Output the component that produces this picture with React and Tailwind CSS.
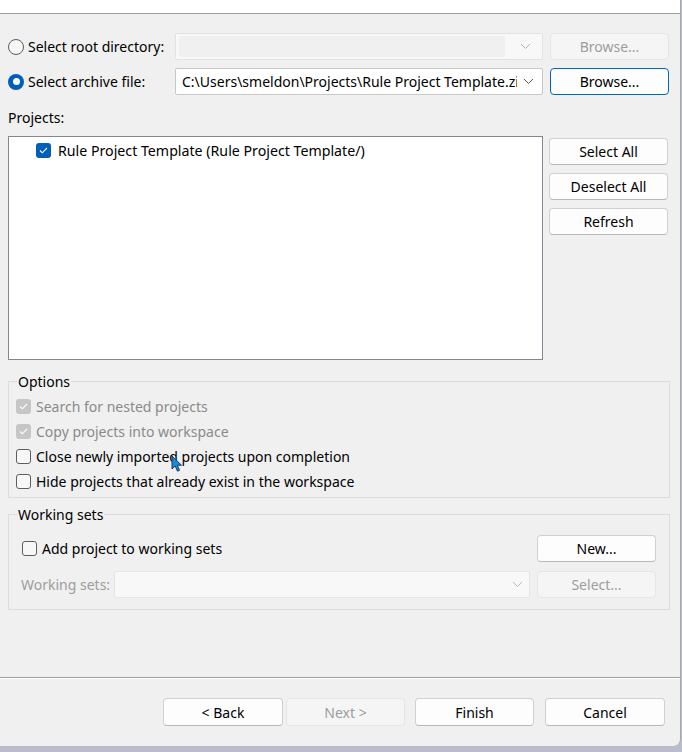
import React from "react";

const F = { fontFamily: '"Noto Sans", "Open Sans", sans-serif' };

function Chevron({ color = "#7a7a7a" }) {
  return (
    <svg width="11" height="7" viewBox="0 0 11 7" fill="none">
      <path d="M1 1l4.5 4.5L10 1" stroke={color} strokeWidth="1" />
    </svg>
  );
}

function Btn({ children, disabled, primary, className = "" }) {
  return (
    <div
      className={
        "flex items-center justify-center rounded-[4px] border text-[14px] " +
        (disabled
          ? "bg-[#f5f5f5] border-[#e5e5e5] text-[#9d9d9d] "
          : primary
          ? "bg-[#fdfdfd] border-[#0067c0] text-black "
          : "bg-[#fdfdfd] border-[#d0d0d0] border-b-[#b8b8b8] text-black ") +
        className
      }
    >
      {children}
    </div>
  );
}

function Check({ checked, disabled }) {
  if (checked) {
    return (
      <div
        className={
          "w-[15px] h-[15px] rounded-[3px] flex items-center justify-center shrink-0 " +
          (disabled ? "bg-[#c6c6c6]" : "bg-[#005fb8]")
        }
      >
        <svg width="9" height="7" viewBox="0 0 9 7" fill="none">
          <path d="M1 3.5l2.3 2.3L8 1" stroke="white" strokeWidth="1.1" />
        </svg>
      </div>
    );
  }
  return (
    <div className="w-[15px] h-[15px] rounded-[3px] border border-[#5e5e5e] bg-[#f7f7f7] shrink-0" />
  );
}

export default function App() {
  return (
    <div className="w-[682px] h-[752px] bg-[#b9bccb] relative overflow-hidden" style={F}>
      <div className="w-[681px] h-[746px] bg-[#f0f0f0] border-r border-[#a8a8a8] rounded-br-[7px] flex flex-col text-[14px] text-black relative">
        <div className="h-[14px] bg-white border-b border-[#a0a0a0] shrink-0" />
        {/* row 1 */}
        <div className="flex items-center mt-[19px] h-[27px]">
          <div className="ml-[8px] w-[16px] h-[16px] rounded-full border border-[#5a5a5a] bg-[#f7f7f7]" />
          <span className="ml-[4px] w-[147px]">Select root directory:</span>
          <div className="w-[368px] h-[27px] border border-[#e2e2e2] rounded-[2px] bg-[#f8f8f8] flex items-center pl-[3px] pr-[11px]">
            <div className="flex-1 h-[21px] bg-[#f0f0f0]" />
            <div className="ml-[15px]"><Chevron color="#b0b0b0" /></div>
          </div>
          <Btn disabled className="ml-[7px] w-[119px] h-[27px]">Browse...</Btn>
        </div>
        {/* row 2 */}
        <div className="flex items-center mt-[8px] h-[27px]">
          <div className="ml-[8px] w-[16px] h-[16px] rounded-full bg-[#005fb8] flex items-center justify-center">
            <div className="w-[7px] h-[7px] rounded-full bg-white" />
          </div>
          <span className="ml-[4px] w-[147px]">Select archive file:</span>
          <div className="w-[368px] h-[27px] border border-[#c8c8c8] rounded-[2px] bg-white flex items-center pl-[6px] pr-[8px]">
            <div className="flex-1 overflow-hidden whitespace-nowrap">C:\Users\smeldon\Projects\Rule Project Template.zip</div>
            <div className="ml-[6px]"><Chevron color="#555" /></div>
          </div>
          <Btn primary className="ml-[7px] w-[119px] h-[27px]">Browse...</Btn>
        </div>
        <div className="ml-[8px] mt-[13px] leading-[20px]">Projects:</div>
        {/* projects list */}
        <div className="flex mt-[8px]">
          <div className="ml-[8px] w-[535px] h-[224px] bg-white border border-[#828790]">
            <div className="flex items-center gap-[7px] ml-[27px] mt-[3px] text-[14.2px]">
              <Check checked />
              <span>Rule Project Template (Rule Project Template/)</span>
            </div>
          </div>
          <div className="ml-[6px] flex flex-col gap-[8px] mt-[2px]">
            <Btn className="w-[119px] h-[27px]">Select All</Btn>
            <Btn className="w-[119px] h-[27px]">Deselect All</Btn>
            <Btn className="w-[119px] h-[27px]">Refresh</Btn>
          </div>
        </div>
        {/* options */}
        <div className="ml-[8px] mt-[21px] w-[662px] h-[117px] border border-[#dcdcdc] relative pt-[12px] pl-[7px]">
          <span className="absolute left-[8px] top-[-10px] px-[1px] bg-[#f0f0f0] leading-[20px]">Options</span>
          <div className="flex flex-col">
            <div className="flex items-center gap-[5px] h-[25px] text-[#8a8a8a]"><Check checked disabled />Search for nested projects</div>
            <div className="flex items-center gap-[5px] h-[25px] text-[#8a8a8a]"><Check checked disabled />Copy projects into workspace</div>
            <div className="flex items-center gap-[5px] h-[25px]"><Check />Close newly imported projects upon completion</div>
            <div className="flex items-center gap-[5px] h-[25px]"><Check />Hide projects that already exist in the workspace</div>
          </div>
        </div>
        {/* working sets */}
        <div className="ml-[8px] mt-[16px] w-[662px] h-[96px] border border-[#dcdcdc] relative">
          <span className="absolute left-[8px] top-[-10px] px-[1px] bg-[#f0f0f0] leading-[20px]">Working sets</span>
          <div className="flex items-center mt-[20px] h-[27px]">
            <div className="ml-[13px]"><Check /></div>
            <span className="ml-[5px] flex-1">Add project to working sets</span>
            <Btn className="w-[119px] h-[27px] mr-[13px]">New...</Btn>
          </div>
          <div className="flex items-center mt-[9px] h-[27px]">
            <span className="ml-[12px] w-[93px] text-[#9d9d9d]">Working sets:</span>
            <div className="w-[416px] h-[27px] border border-[#e5e5e5] rounded-[2px] bg-[#f8f8f8] flex items-center justify-end pr-[6px]">
              <Chevron color="#b8b8b8" />
            </div>
            <Btn disabled className="ml-[7px] w-[119px] h-[27px]">Select...</Btn>
          </div>
        </div>
        <div className="flex-1" />
        <div className="border-t border-[#a0a0a0] shrink-0" />
        <div className="border-t border-white shrink-0" />
        <div className="h-[67px] shrink-0 flex items-start pt-[19px] pl-[163px]">
          <Btn className="w-[120px] h-[28px]">&lt; Back</Btn>
          <Btn disabled className="ml-[3px] w-[119px] h-[28px]">Next &gt;</Btn>
          <Btn className="ml-[10px] w-[119px] h-[28px]">Finish</Btn>
          <Btn className="ml-[11px] w-[120px] h-[28px]">Cancel</Btn>
        </div>
        {/* mouse cursor */}
        <svg className="absolute left-[171px] top-[455px]" width="12" height="18" viewBox="0 0 12 18">
          <path d="M1 1v13l3.2-3 2.3 5.2 2-0.9-2.2-5.1H10.5z" fill="#1e8ad6" stroke="#0b3f6e" strokeWidth="1" />
        </svg>
      </div>
    </div>
  );
}
